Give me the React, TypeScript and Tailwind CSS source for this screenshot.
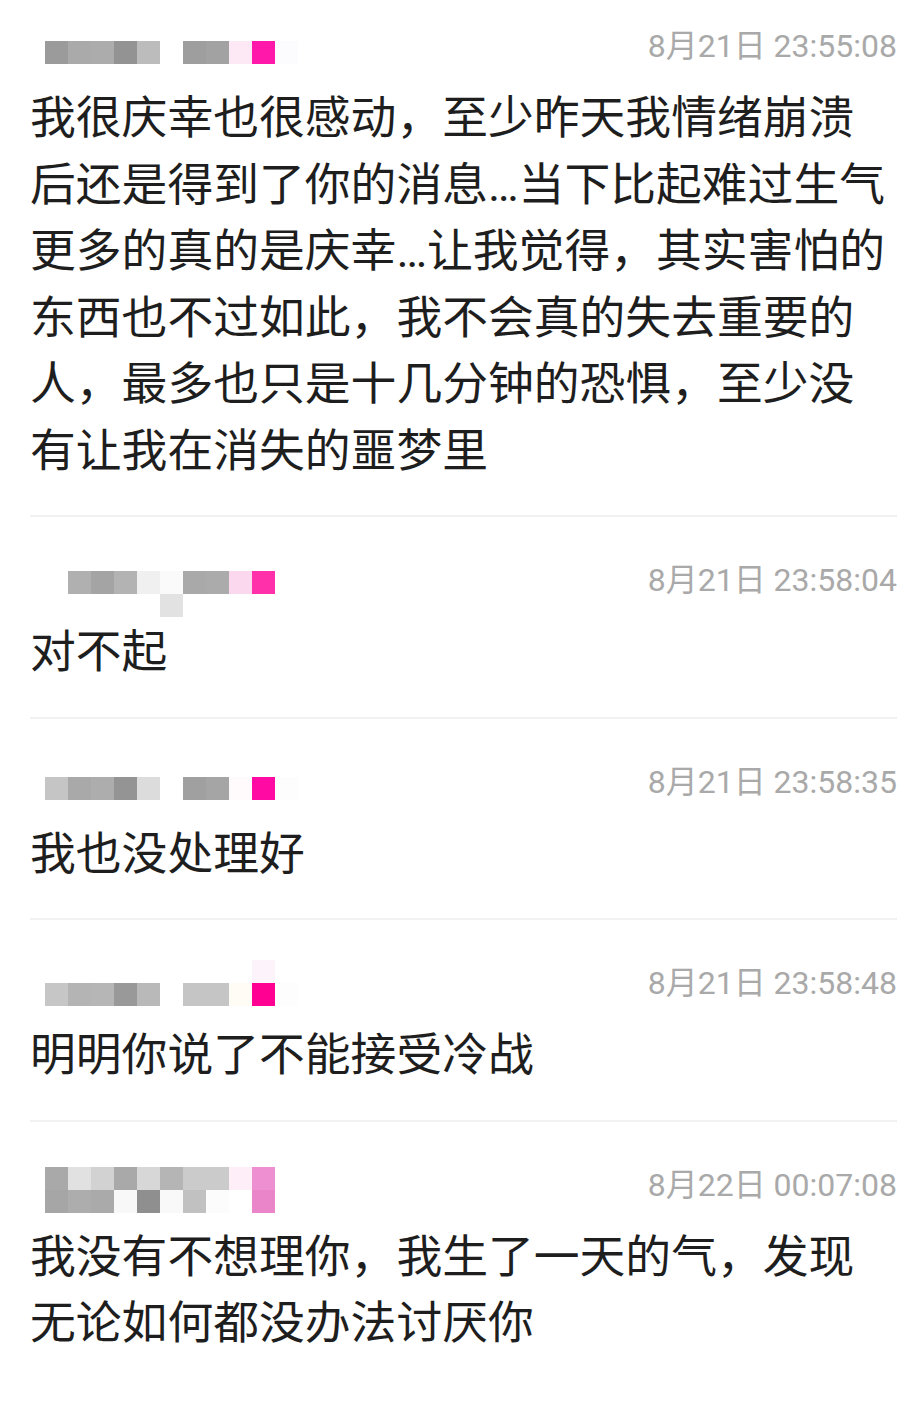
const messages = [
  {
    time: "8月21日 23:55:08",
    top: "pt-[23px]",
    mosaicTop: "mt-[18px]",
    mosaic: [
      ["bg-[#9b9b9b]", "bg-[#aaaaaa]", "bg-[#acacac]", "bg-[#939393]", "bg-[#bcbcbc]", "bg-white", "bg-[#9e9e9e]", "bg-[#a2a2a2]", "bg-[#fde9f6]", "bg-[#ff18a9]", "bg-[#fcfcfe]"],
    ],
    lines: [
      "我很庆幸也很感动，至少昨天我情绪崩溃",
      "后还是得到了你的消息…当下比起难过生气",
      "更多的真的是庆幸…让我觉得，其实害怕的",
      "东西也不过如此，我不会真的失去重要的",
      "人，最多也只是十几分钟的恐惧，至少没",
      "有让我在消失的噩梦里",
    ],
  },
  {
    time: "8月21日 23:58:04",
    top: "pt-[40px]",
    mosaicTop: "mt-[14px]",
    mosaic: [
      ["bg-white", "bg-[#b0b0b0]", "bg-[#a4a4a4]", "bg-[#b3b3b3]", "bg-[#f0f0f0]", "bg-[#fafafa]", "bg-[#a9a9a9]", "bg-[#ababab]", "bg-[#fcd8ee]", "bg-[#ff30a9]", "bg-white"],
      ["bg-white", "bg-white", "bg-white", "bg-white", "bg-white", "bg-[#e2e2e2]", "bg-white", "bg-white", "bg-white", "bg-white", "bg-white"],
    ],
    lines: ["对不起"],
  },
  {
    time: "8月21日 23:58:35",
    top: "pt-[40px]",
    mosaicTop: "mt-[18px]",
    mosaic: [
      ["bg-[#c5c5c5]", "bg-[#a9a9a9]", "bg-[#adadad]", "bg-[#949494]", "bg-[#dcdcdc]", "bg-white", "bg-[#a0a0a0]", "bg-[#a5a5a5]", "bg-[#fffafc]", "bg-[#ff0aa2]", "bg-[#fdfdfd]"],
    ],
    lines: ["我也没处理好"],
  },
  {
    time: "8月21日 23:58:48",
    top: "pt-[40px]",
    mosaicTop: "mt-0",
    mosaic: [
      ["bg-white", "bg-white", "bg-white", "bg-white", "bg-white", "bg-white", "bg-white", "bg-white", "bg-white", "bg-[#fdf3fb]", "bg-white"],
      ["bg-[#c6c6c6]", "bg-[#b4b4b4]", "bg-[#b6b6b6]", "bg-[#999999]", "bg-[#b9b9b9]", "bg-white", "bg-[#c5c5c5]", "bg-[#c5c5c5]", "bg-[#fefcf4]", "bg-[#ff0092]", "bg-[#fdfdfd]"],
    ],
    lines: ["明明你说了不能接受冷战"],
  },
  {
    time: "8月22日 00:07:08",
    top: "pt-[40px]",
    mosaicTop: "mt-[5px]",
    mosaic: [
      ["bg-[#a9a9a9]", "bg-[#e1e1e1]", "bg-[#d2d2d2]", "bg-[#a9a9a9]", "bg-[#d7d7d7]", "bg-[#b5b5b5]", "bg-[#cbcbcb]", "bg-[#cbcbcb]", "bg-[#fdeef8]", "bg-[#ee8fd2]", "bg-white"],
      ["bg-[#a6a6a6]", "bg-[#adadad]", "bg-[#aaaaaa]", "bg-[#f8f8f8]", "bg-[#8f8f8f]", "bg-[#f9f9f9]", "bg-[#c1c1c1]", "bg-[#fcfcfc]", "bg-white", "bg-[#e985c8]", "bg-white"],
    ],
    lines: ["我没有不想理你，我生了一天的气，发现", "无论如何都没办法讨厌你"],
    last: true,
  },
];

function Mosaic({ rows, className }: { rows: string[][]; className: string }) {
  // blurred nickname, drawn as 23px blocks
  return (
    <div className={`flex flex-col blur-[0.6px] ${className}`}>
      {rows.map((row, i) => (
        <div key={i} className="flex">
          {row.map((c, j) => (
            <div key={j} className={`h-[23px] w-[23px] ${c}`} />
          ))}
        </div>
      ))}
    </div>
  );
}

// the ellipsis sits on the baseline, like a latin one
function Line({ text }: { text: string }) {
  const parts = text.split("…");
  return (
    <div className="h-[66.5px] overflow-hidden whitespace-nowrap">
      {parts.map((p, i) => (
        <span key={i}>
          {i > 0 && <span className="font-['Roboto',sans-serif] leading-none">…</span>}
          {p}
        </span>
      ))}
    </div>
  );
}

export default function App() {
  return (
    <div className="min-h-[1416px] bg-white font-['Noto_Sans_CJK_SC',sans-serif]">
      <div className="ml-[30px] w-[867px]">
        {messages.map((m) => (
          <div
            key={m.time}
            className={`${m.top} ${m.last ? "pb-[35px]" : "border-b-2 border-[#f1f1f1] pb-[35px]"}`}
          >
            <div className="flex h-[46px] items-start justify-between">
              <Mosaic rows={m.mosaic} className={`ml-[15px] ${m.mosaicTop}`} />
              <span className="self-center font-['Roboto','Noto_Sans_CJK_SC',sans-serif] text-[32px] leading-none text-[#a9a9a9]">
                {m.time}
              </span>
            </div>
            <div className="mt-[12px] text-[45.8px] leading-[66.5px] text-[#1e1e1e]">
              {m.lines.map((line) => (
                <Line key={line} text={line} />
              ))}
            </div>
          </div>
        ))}
      </div>
    </div>
  );
}
